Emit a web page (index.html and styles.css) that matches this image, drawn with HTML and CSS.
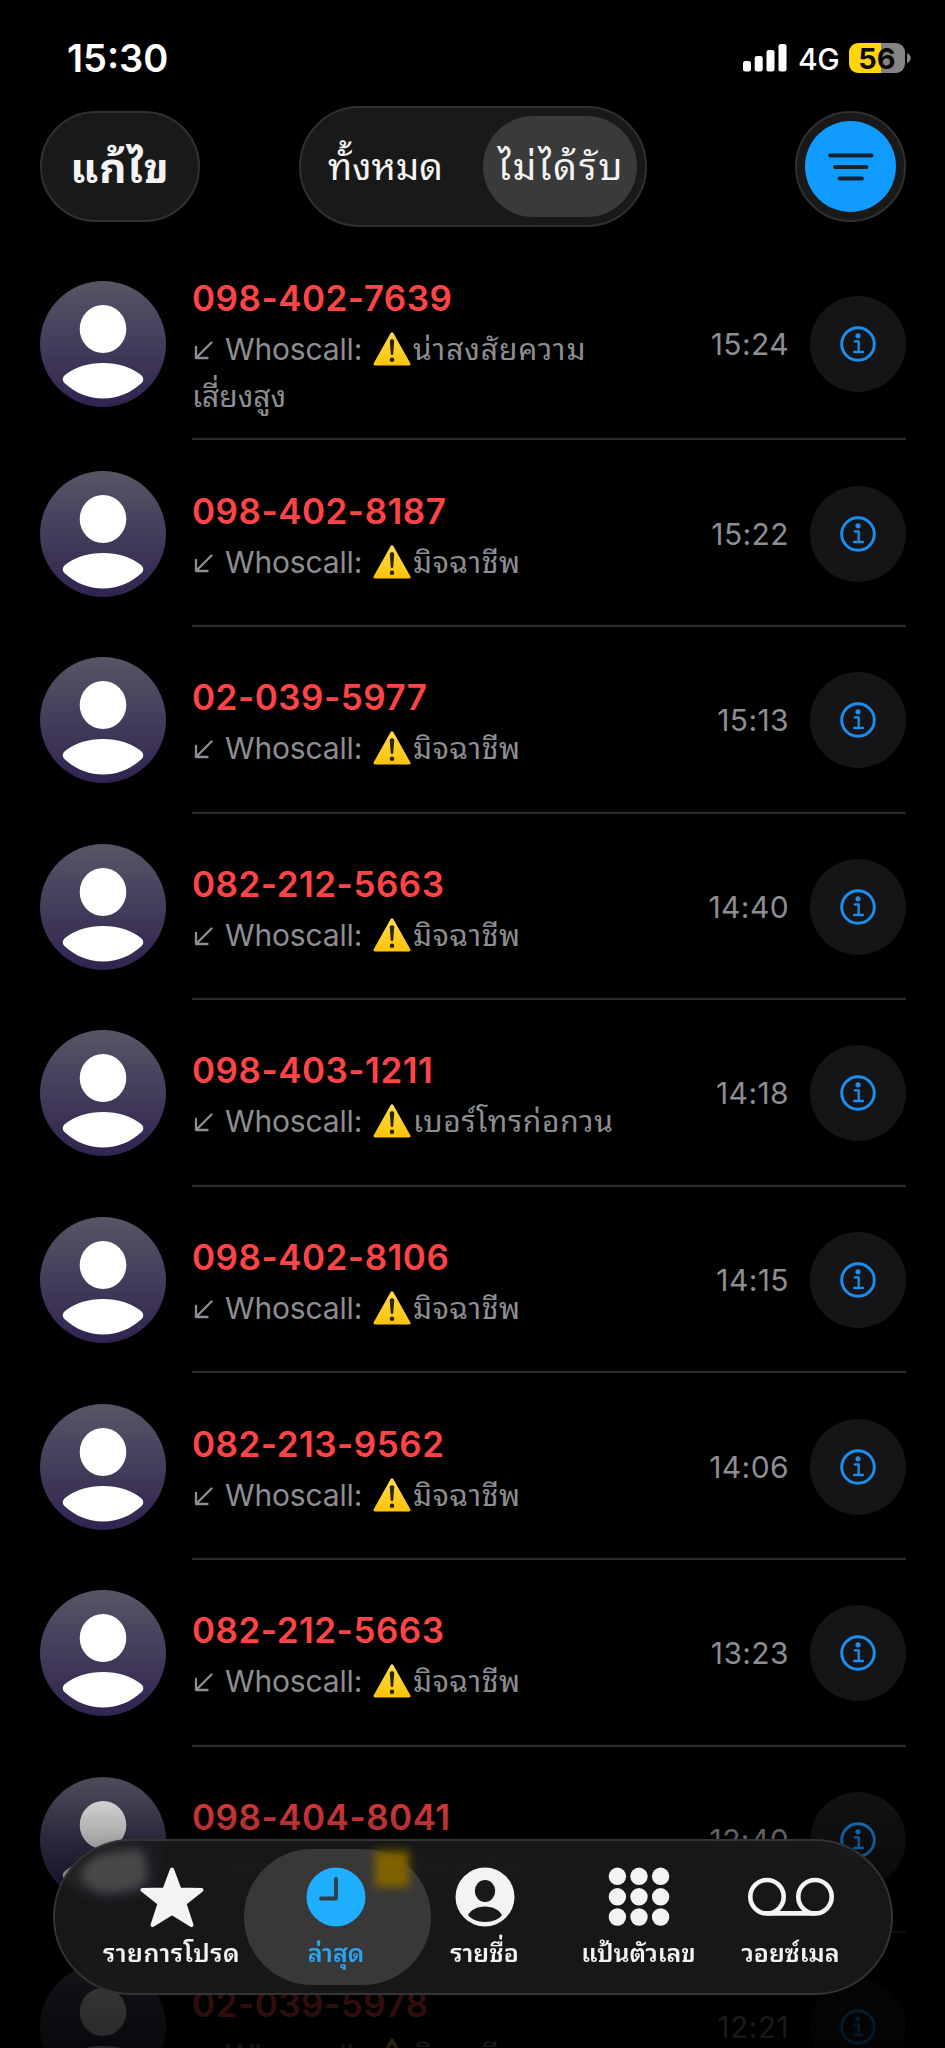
FILE: index.html
```html
<!DOCTYPE html>
<html lang="th">
<head>
<meta charset="utf-8">
<title>ล่าสุด</title>
<link rel="stylesheet" href="styles.css">
</head>
<body>
<svg class="defs" aria-hidden="true">
  <defs>
    <linearGradient id="avatar-bg" x1="0" y1="0" x2="0" y2="1"><stop offset="0" stop-color="#575565"/><stop offset="1" stop-color="#302450"/></linearGradient>
    <linearGradient id="warn-bg" x1="0" y1="0" x2="0" y2="1"><stop offset="0" stop-color="#ffdc50"/><stop offset="1" stop-color="#fec309"/></linearGradient>
    <symbol id="avatar" viewBox="0 0 126 126">
      <circle cx="63" cy="63" r="63" fill="url(#avatar-bg)"/>
      <ellipse cx="63" cy="48" rx="23.3" ry="24" fill="#fff"/>
      <path d="M25 94C35 86 48 82 63 82s28 4 38 12c3 2.500 3 6 0 8.500C91 112 77 117.500 63 117.500S35 112 25 102.500c-3-2.500-3-6 0-8.500z" fill="#fff"/>
    </symbol>
    <symbol id="warn" viewBox="0 0 38 34">
      <path d="M19 1.800 36 32H2z" fill="url(#warn-bg)" stroke="url(#warn-bg)" stroke-width="3" stroke-linejoin="round"/>
      <path d="M16.800 9.300c0-2.600 4.400-2.600 4.400 0l-.9 12.500c-.1 1.700-2.500 1.700-2.600 0z" fill="#2d2608"/>
      <circle cx="19" cy="27.800" r="2.300" fill="#2d2608"/>
    </symbol>
    <symbol id="arrow" viewBox="0 0 20 20">
      <path d="M17.500 1.500 2.500 16.500M2 6v11h11.500" fill="none" stroke="#8d8d93" stroke-width="2.300" stroke-linecap="round" stroke-linejoin="round"/>
    </symbol>
    <symbol id="info" viewBox="0 0 36 36">
      <circle cx="18" cy="18" r="16.300" fill="none" stroke="#1a8ff0" stroke-width="2.900"/>
      <circle cx="18" cy="9.800" r="2.600" fill="#1a8ff0"/>
      <path d="M14.700 15.300h4v10.600M14 26h9" fill="none" stroke="#1a8ff0" stroke-width="2.300" stroke-linecap="round" stroke-linejoin="round"/>
    </symbol>
  </defs>
</svg>

<main class="phone">
  <header class="status">
    <span class="clock">15:30</span>
    <span class="signals">
      <svg class="bars" viewBox="0 0 44 28"><rect x="0" y="17" width="8" height="10.500" rx="2.300"/><rect x="11.700" y="12" width="8" height="15.500" rx="2.300"/><rect x="23.500" y="6" width="8" height="21.500" rx="2.300"/><rect x="35.500" y="0" width="8" height="27.500" rx="2.300"/></svg>
      <span class="network">4G</span>
      <span class="battery">56</span>
      <svg class="battery-tip" viewBox="0 0 4 10"><path d="M0 0c5 2 5 8 0 10z"/></svg>
    </span>
  </header>

  <nav class="toolbar">
    <button class="glass edit">แก้ไข</button>
    <div class="glass segments"><span class="segment all">ทั้งหมด</span><span class="segment missed">ไม่ได้รับ</span></div>
    <button class="glass filter"><span class="filter-dot"><svg class="filter-icon" viewBox="0 0 46 28"><path d="M2 2.500h41.500M7 14h31.500M11.500 25.500h22.500"/></svg></span></button>
  </nav>

  <section class="calls">
    <article class="call tall">
      <svg class="avatar"><use href="#avatar"/></svg>
      <div class="body"><div class="text"><div class="number">098-402-7639</div><div class="detail"><svg class="arrow"><use href="#arrow"/></svg><span class="app">Whoscall:</span><svg class="warn"><use href="#warn"/></svg><span class="suspect">น่าสงสัยความ</span><br><span class="risk">เสี่ยงสูง</span></div></div>
      <time>15:24</time><span class="info"><svg class="info-icon"><use href="#info"/></svg></span></div>
    </article>
    <article class="call">
      <svg class="avatar"><use href="#avatar"/></svg>
      <div class="body"><div class="text"><div class="number">098-402-8187</div><div class="detail"><svg class="arrow"><use href="#arrow"/></svg><span class="app">Whoscall:</span><svg class="warn"><use href="#warn"/></svg><span class="scam">มิจฉาชีพ</span></div></div>
      <time>15:22</time><span class="info"><svg class="info-icon"><use href="#info"/></svg></span></div>
    </article>
    <article class="call">
      <svg class="avatar"><use href="#avatar"/></svg>
      <div class="body"><div class="text"><div class="number">02-039-5977</div><div class="detail"><svg class="arrow"><use href="#arrow"/></svg><span class="app">Whoscall:</span><svg class="warn"><use href="#warn"/></svg><span class="scam">มิจฉาชีพ</span></div></div>
      <time>15:13</time><span class="info"><svg class="info-icon"><use href="#info"/></svg></span></div>
    </article>
    <article class="call">
      <svg class="avatar"><use href="#avatar"/></svg>
      <div class="body"><div class="text"><div class="number">082-212-5663</div><div class="detail"><svg class="arrow"><use href="#arrow"/></svg><span class="app">Whoscall:</span><svg class="warn"><use href="#warn"/></svg><span class="scam">มิจฉาชีพ</span></div></div>
      <time>14:40</time><span class="info"><svg class="info-icon"><use href="#info"/></svg></span></div>
    </article>
    <article class="call">
      <svg class="avatar"><use href="#avatar"/></svg>
      <div class="body"><div class="text"><div class="number">098-403-1211</div><div class="detail"><svg class="arrow"><use href="#arrow"/></svg><span class="app">Whoscall:</span><svg class="warn"><use href="#warn"/></svg><span class="spam">เบอร์โทรก่อกวน</span></div></div>
      <time>14:18</time><span class="info"><svg class="info-icon"><use href="#info"/></svg></span></div>
    </article>
    <article class="call">
      <svg class="avatar"><use href="#avatar"/></svg>
      <div class="body"><div class="text"><div class="number">098-402-8106</div><div class="detail"><svg class="arrow"><use href="#arrow"/></svg><span class="app">Whoscall:</span><svg class="warn"><use href="#warn"/></svg><span class="scam">มิจฉาชีพ</span></div></div>
      <time>14:15</time><span class="info"><svg class="info-icon"><use href="#info"/></svg></span></div>
    </article>
    <article class="call">
      <svg class="avatar"><use href="#avatar"/></svg>
      <div class="body"><div class="text"><div class="number">082-213-9562</div><div class="detail"><svg class="arrow"><use href="#arrow"/></svg><span class="app">Whoscall:</span><svg class="warn"><use href="#warn"/></svg><span class="scam">มิจฉาชีพ</span></div></div>
      <time>14:06</time><span class="info"><svg class="info-icon"><use href="#info"/></svg></span></div>
    </article>
    <article class="call">
      <svg class="avatar"><use href="#avatar"/></svg>
      <div class="body"><div class="text"><div class="number">082-212-5663</div><div class="detail"><svg class="arrow"><use href="#arrow"/></svg><span class="app">Whoscall:</span><svg class="warn"><use href="#warn"/></svg><span class="scam">มิจฉาชีพ</span></div></div>
      <time>13:23</time><span class="info"><svg class="info-icon"><use href="#info"/></svg></span></div>
    </article>
    <article class="call">
      <svg class="avatar"><use href="#avatar"/></svg>
      <div class="body"><div class="text"><div class="number">098-404-8041</div><div class="detail"><svg class="arrow"><use href="#arrow"/></svg><span class="app">Whoscall:</span><svg class="warn"><use href="#warn"/></svg><span class="scam">มิจฉาชีพ</span></div></div>
      <time>12:40</time><span class="info"><svg class="info-icon"><use href="#info"/></svg></span></div>
    </article>
    <article class="call">
      <svg class="avatar"><use href="#avatar"/></svg>
      <div class="body"><div class="text"><div class="number">02-039-5978</div><div class="detail"><svg class="arrow"><use href="#arrow"/></svg><span class="app">Whoscall:</span><svg class="warn"><use href="#warn"/></svg><span class="scam">มิจฉาชีพ</span></div></div>
      <time>12:21</time><span class="info"><svg class="info-icon"><use href="#info"/></svg></span></div>
    </article>
  </section>

  <div class="fade"></div>

  <nav class="tabbar">
    <span class="glow glow-avatar"></span>
    <a class="tab favorites"><svg class="tab-icon" viewBox="0 0 64 64"><path d="M32 4.500 39.500 24.500 61.500 25 44.500 38.500 51.500 60 32 48 12.500 60 19.500 38.500 2.500 25 24.500 24.500z" fill="#f3f3f3" stroke="#f3f3f3" stroke-width="4" stroke-linejoin="round"/></svg><span class="tab-label">รายการโปรด</span></a>
    <a class="tab recents"><span class="glow glow-warn"></span><svg class="tab-icon" viewBox="0 0 64 64"><circle cx="32" cy="34" r="29.500" fill="#20aeff"/><path d="M32 16v19.500H17" fill="none" stroke="#333c43" stroke-width="3.800" stroke-linecap="round" stroke-linejoin="round"/></svg><span class="tab-label">ล่าสุด</span></a>
    <a class="tab contacts"><svg class="tab-icon" viewBox="0 0 64 64"><circle cx="32" cy="34" r="29.500" fill="#f3f3f3"/><ellipse cx="32" cy="28" rx="10.200" ry="11" fill="#191919"/><path d="M15 52c3-5 9-8.500 17-8.500S46 47 49 52c-3 4-9 7-17 7s-14-3-17-7z" fill="#191919"/></svg><span class="tab-label">รายชื่อ</span></a>
    <a class="tab keypad"><svg class="tab-icon" viewBox="0 0 64 64"><g fill="#f3f3f3"><circle cx="10.400" cy="13.300" r="8.700"/><circle cx="32" cy="13.300" r="8.700"/><circle cx="53.600" cy="13.300" r="8.700"/><circle cx="10.400" cy="33.800" r="8.700"/><circle cx="32" cy="33.800" r="8.700"/><circle cx="53.600" cy="33.800" r="8.700"/><circle cx="10.400" cy="54" r="8.700"/><circle cx="32" cy="54" r="8.700"/><circle cx="53.600" cy="54" r="8.700"/></g></svg><span class="tab-label">แป้นตัวเลข</span></a>
    <a class="tab voicemail"><svg class="tab-icon wide" viewBox="0 0 88 64"><g fill="none" stroke="#f3f3f3" stroke-width="4.600"><circle cx="20" cy="33.700" r="16.700"/><circle cx="68" cy="33.700" r="16.700"/><path d="M20 50.400h48"/></g></svg><span class="tab-label">วอยซ์เมล</span></a>
  </nav>
</main>
</body>
</html>
```

FILE: styles.css
```css
* { box-sizing: border-box; }

body {
  margin: 0;
  background: #000;
  font-family: Inter, "Noto Sans Thai Looped", "Noto Looped Thai", Loma, Garuda, Waree, "Noto Sans Thai", sans-serif;
}

.defs { position: absolute; width: 0; height: 0; }

.phone {
  position: relative;
  width: 945px;
  height: 2048px;
  overflow: hidden;
  background: #000;
  color: #fff;
}

button { border: 0; padding: 0; font: inherit; color: inherit; }
svg { display: block; flex: none; }

/* Status bar */
.status {
  display: flex;
  justify-content: space-between;
  height: 106px;
  padding: 33px 34px 0 67px;
}
.clock { font-size: 38px; font-weight: 600; line-height: 50px; }
.signals { display: flex; align-items: center; height: 50px; }
.bars { width: 44px; height: 28px; fill: #fff; }
.network { margin-left: 11px; width: 42px; font-size: 30px; font-weight: 500; letter-spacing: -0.5px; line-height: 50px; padding-top: 2px; }
.battery {
  width: 56px;
  height: 30px;
  margin-left: 9px;
  border-radius: 9px;
  background: linear-gradient(90deg, #ffd60a 57%, #848484 57%);
  color: #0c0a00;
  font-size: 29px;
  font-weight: 700;
  line-height: 31px;
  text-align: center;
}
.battery-tip { width: 4px; height: 10px; margin-left: 2px; fill: #848484; }

/* Toolbar */
.toolbar {
  display: flex;
  align-items: center;
  justify-content: space-between;
  height: 121px;
  padding: 0 39px 0 40px;
}
.glass { background: #191919; border: 2px solid #303030; }
.edit {
  width: 160px;
  height: 111px;
  padding-bottom: 6px;
  border-radius: 56px;
  color: #f3f3f3;
  font-size: 42px;
  font-weight: 700;
  letter-spacing: 1px;
}
.segments {
  display: flex;
  align-items: center;
  width: 348px;
  height: 121px;
  margin-right: 49px;
  padding: 0 8px;
  border-radius: 61px;
  color: #f3f3f3;
  font-size: 37px;
}
.segment { display: flex; align-items: center; justify-content: center; height: 101px; padding-bottom: 7px; white-space: nowrap; }
.all { width: 174px; padding-right: 21px; }
.missed { width: 154px; padding-left: 2px; border-radius: 51px; background: #3a3a3a; letter-spacing: 2px; }
.filter { display: grid; place-items: center; width: 111px; height: 111px; border-radius: 50%; }
.filter-dot { display: grid; place-items: center; width: 91px; height: 91px; border-radius: 50%; background: #0f9bff; }
.filter-icon { width: 46px; height: 28px; fill: none; stroke: #15232f; stroke-width: 3.800; stroke-linecap: round; }

/* Call list */
.calls { padding: 21px 39px 0 40px; }
.call { display: flex; align-items: center; gap: 26px; height: 186.640px; }
.tall { height: 192.300px; }
.avatar { width: 126px; height: 126px; }
.body { display: flex; align-items: center; flex: 1; height: 100%; box-shadow: inset 0 -2.300px #2b2b2d; }
.text { flex: 1; padding-top: 4px; white-space: nowrap; }
.number { margin-bottom: 3px; color: #ff4447; font-size: 35px; font-weight: 600; line-height: 50px; letter-spacing: 0.500px; }
.detail { color: #8d8d93; font-size: 30px; line-height: 47px; }
.detail svg { display: inline-block; }
.arrow { width: 20px; height: 20px; margin-left: 2px; vertical-align: -1px; }
.app { display: inline-block; width: 140px; margin-left: 11px; letter-spacing: -0.150px; }
.warn { width: 38px; height: 34px; margin: 0 2px 0 8px; vertical-align: -6px; }
.suspect { letter-spacing: 0.900px; }
.spam { letter-spacing: 0.700px; }
.scam { letter-spacing: 0.600px; }
time { color: #8d8d93; font-size: 30px; margin-right: 21px; letter-spacing: 0.400px; }
.info { display: grid; place-items: center; width: 96px; height: 96px; border-radius: 50%; background: #151517; }
.info-icon { width: 36px; height: 36px; }

.fade {
  position: absolute;
  left: 0;
  right: 0;
  top: 1740px;
  height: 308px;
  background: linear-gradient(rgba(0,0,0,0), rgba(0,0,0,.18) 20%, rgba(0,0,0,.4) 36%, rgba(0,0,0,.65) 58%, rgba(0,0,0,.8) 82%, rgba(0,0,0,.84));
}

/* Floating tab bar */
.tabbar {
  position: absolute;
  left: 53px;
  top: 1839px;
  display: flex;
  width: 840px;
  height: 156px;
  padding: 8px 8px 8px 32px;
  border: 2px solid #343436;
  border-radius: 78px;
  background: rgba(25,25,25,.9);
  backdrop-filter: blur(4px);
}
.tab { position: relative; display: flex; flex-direction: column; align-items: center; height: 136px; color: #f3f3f3; }
.favorites { width: 157px; padding: 16px 0 0 12px; }
.recents { width: 187px; padding: 14px 3px 0 0; border-radius: 68px; background: rgba(60,60,60,.92); color: #2ba5f2; }
.contacts { width: 107px; padding-top: 14px; }
.keypad { width: 201px; padding-top: 14px; }
.voicemail { width: 103px; padding-top: 14px; }
.tab-icon { position: relative; width: 64px; height: 64px; }
.wide { width: 88px; }
.tab-label { margin-top: 6px; font-size: 25px; font-weight: 600; line-height: 40px; white-space: nowrap; }
.favorites .tab-label { margin-top: 4px; letter-spacing: 0.500px; }
.glow { position: absolute; filter: blur(5px); }
.glow-avatar { left: 27px; top: 11px; width: 64px; height: 40px; border-radius: 60% 20% 40% 60%; background: #484848; box-shadow: 3px 2px 8px 3px #282133; transform: rotate(-8deg); }
.glow-warn { left: 131px; top: 2px; width: 34px; height: 36px; background: #806300; }
```
